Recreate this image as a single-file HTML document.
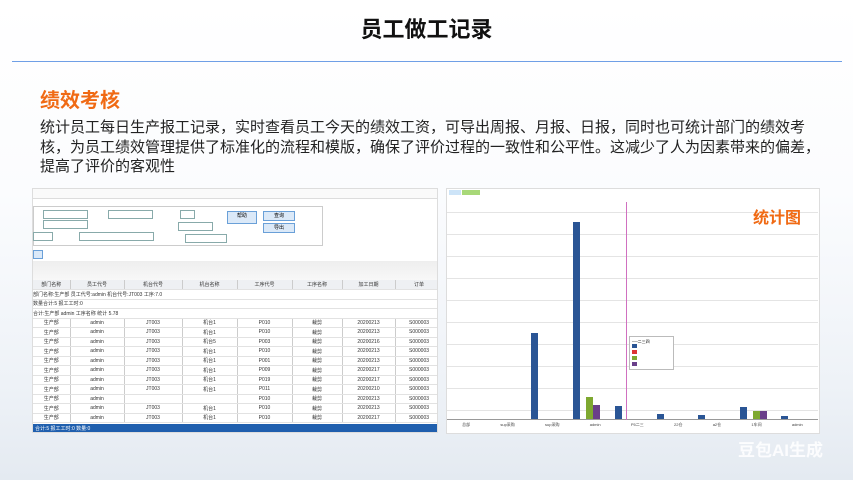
<!DOCTYPE html>
<html><head><meta charset="utf-8"><style>
*{margin:0;padding:0;box-sizing:border-box}
body{width:853px;height:480px;overflow:hidden;position:relative;font-family:"Liberation Sans","Noto Sans CJK SC",sans-serif;background:linear-gradient(180deg,#fff 0%,#fbfcfe 40%,#eef2f7 80%,#e4eaf1 100%)}
.a{position:absolute}
h1{position:absolute;left:0;width:853px;top:12px;text-align:center;font-size:22px;font-weight:bold;color:#111}
.hr{left:12px;top:61px;width:830px;height:1px;background:#6f9fe6}
.sub{left:40px;top:84px;font-size:20px;color:#f06a14;font-weight:bold}
.p{left:40px;top:118px;width:790px;font-size:15px;line-height:19.5px;color:#222}
.tbl td{border-right:1px solid #ccc;border-bottom:1px solid #e2e2e2;text-align:center;font-size:5px;color:#333;height:9.5px;white-space:nowrap;overflow:hidden}
.tbl{border-collapse:collapse;table-layout:fixed}
.in{position:absolute;height:9px;border:1px solid #8aa;background:#fff}
.btn{position:absolute;height:10px;border:1px solid #6aa0d8;background:#dbe9f8;font-size:5px;text-align:center;line-height:8px}
.g{position:absolute;left:0;width:371px;height:1px;background:#e4e4e4}
.bar{position:absolute;bottom:0;width:7px}
</style></head><body>
<h1>员工做工记录</h1>
<div class="a hr"></div>
<div class="a sub">绩效考核</div>
<div class="a p">统计员工每日生产报工记录，实时查看员工今天的绩效工资，可导出周报、月报、日报，同时也可统计部门的绩效考核，为员工绩效管理提供了标准化的流程和模版，确保了评价过程的一致性和公平性。这减少了人为因素带来的偏差，提高了评价的客观性</div>

<div class="a" style="left:32px;top:188px;width:406px;height:245px;background:#fff;border:1px solid #ddd;overflow:hidden">
 <div class="a" style="left:0;top:0;width:406px;height:10px;border-bottom:1px solid #ddd;background:#fafafa"></div>
 <div class="a" style="left:0;top:17px;width:290px;height:40px;border:1px solid #ccc"></div>
 <div class="in" style="left:10px;top:21px;width:45px"></div>
 <div class="in" style="left:75px;top:21px;width:45px"></div>
 <div class="in" style="left:10px;top:31px;width:45px"></div>
 <div class="in" style="left:147px;top:21px;width:15px"></div>
 <div class="in" style="left:145px;top:33px;width:35px"></div>
 <div class="in" style="left:0;top:43px;width:20px"></div>
 <div class="in" style="left:46px;top:43px;width:75px"></div>
 <div class="in" style="left:152px;top:45px;width:42px"></div>
 <div class="btn" style="left:194px;top:22px;width:30px;height:13px">帮助</div>
 <div class="btn" style="left:230px;top:22px;width:32px">查询</div>
 <div class="btn" style="left:230px;top:34px;width:32px">导出</div>
 <div class="a" style="left:0;top:61px;width:10px;height:9px;border:1px solid #6aa0d8;background:#dbe9f8"></div>
 <div class="a" style="left:0;top:72px;width:406px;height:20px;background:linear-gradient(#eee,#f8f8f8)"></div>
 <table class="tbl a" style="left:0;top:91px;width:410px">
  <colgroup><col width="37"><col width="54"><col width="58"><col width="55"><col width="55"><col width="50"><col width="53"><col width="48"></colgroup>
  <tr style="background:#eef0f3"><td>部门名称</td><td>员工代号</td><td>机台代号</td><td>机台名称</td><td>工序代号</td><td>工序名称</td><td>加工日期</td><td>订单</td></tr>
  <tr><td colspan="8" style="text-align:left">部门名称:生产部 员工代号:admin 机台代号:JT003 工序:7.0</td></tr>
  <tr><td colspan="8" style="text-align:left">数量合计:5 报工工时:0</td></tr>
  <tr><td colspan="8" style="text-align:left">合计:生产部 admin 工序名称 统计 5.78</td></tr>
  <tr><td>生产部</td><td>admin</td><td>JT003</td><td>机台1</td><td>P010</td><td>裁剪</td><td>20200213</td><td>S000003</td></tr>
  <tr><td>生产部</td><td>admin</td><td>JT003</td><td>机台1</td><td>P010</td><td>裁剪</td><td>20200213</td><td>S000003</td></tr>
  <tr><td>生产部</td><td>admin</td><td>JT003</td><td>机台5</td><td>P003</td><td>裁剪</td><td>20200216</td><td>S000003</td></tr>
  <tr><td>生产部</td><td>admin</td><td>JT003</td><td>机台1</td><td>P010</td><td>裁剪</td><td>20200213</td><td>S000003</td></tr>
  <tr><td>生产部</td><td>admin</td><td>JT003</td><td>机台1</td><td>P001</td><td>裁剪</td><td>20200213</td><td>S000003</td></tr>
  <tr><td>生产部</td><td>admin</td><td>JT003</td><td>机台1</td><td>P009</td><td>裁剪</td><td>20200217</td><td>S000003</td></tr>
  <tr><td>生产部</td><td>admin</td><td>JT003</td><td>机台1</td><td>P019</td><td>裁剪</td><td>20200217</td><td>S000003</td></tr>
  <tr><td>生产部</td><td>admin</td><td>JT003</td><td>机台1</td><td>P011</td><td>裁剪</td><td>20200210</td><td>S000003</td></tr>
  <tr><td>生产部</td><td>admin</td><td></td><td></td><td>P010</td><td>裁剪</td><td>20200213</td><td>S000003</td></tr>
  <tr><td>生产部</td><td>admin</td><td>JT003</td><td>机台1</td><td>P010</td><td>裁剪</td><td>20200213</td><td>S000003</td></tr>
  <tr><td>生产部</td><td>admin</td><td>JT003</td><td>机台1</td><td>P010</td><td>裁剪</td><td>20200217</td><td>S000003</td></tr>
 </table>
 <div class="a" style="left:0;top:235px;width:406px;height:10px;background:#1f5fae;color:#fff;font-size:5px;line-height:10px;padding-left:2px">合计:5 报工工时:0 数量:0</div>
</div>

<div class="a" style="left:446px;top:188px;width:374px;height:246px;background:#fff;border:1px solid #ddd">
 <div class="a" style="left:2px;top:1px;width:12px;height:5px;background:#cde4f8"></div>
 <div class="a" style="left:15px;top:1px;width:18px;height:5px;background:#a8d878"></div>
 <div class="a" style="left:0;top:13px;width:371px;height:218px">
  <div class="g" style="top:10px"></div><div class="g" style="top:32px"></div><div class="g" style="top:54px"></div><div class="g" style="top:76px"></div><div class="g" style="top:98px"></div><div class="g" style="top:120px"></div><div class="g" style="top:142px"></div><div class="g" style="top:164px"></div><div class="g" style="top:186px"></div><div class="g" style="top:208px"></div>
  <div class="a" style="left:0;top:217px;width:371px;height:1px;background:#999"></div>
  <div class="a" style="left:179px;top:0;width:1px;height:218px;background:#d070c0"></div>
  <div class="a" style="left:0;top:0;width:371px;height:217px">
   <div class="bar" style="left:84px;height:86px;background:#2a5595"></div>
   <div class="bar" style="left:126px;height:197px;background:#2a5595"></div>
   <div class="bar" style="left:139px;height:22px;background:#7ea830"></div>
   <div class="bar" style="left:146px;height:14px;background:#6a3f8a"></div>
   <div class="bar" style="left:168px;height:13px;background:#2a5595"></div>
   <div class="bar" style="left:210px;height:5px;background:#2a5595"></div>
   <div class="bar" style="left:251px;height:4px;background:#2a5595"></div>
   <div class="bar" style="left:293px;height:12px;background:#2a5595"></div>
   <div class="bar" style="left:306px;height:8px;background:#7ea830"></div>
   <div class="bar" style="left:313px;height:8px;background:#6a3f8a"></div>
   <div class="bar" style="left:334px;height:3px;background:#2a5595"></div>
  </div>
  <div class="a" style="left:182px;top:134px;width:45px;height:34px;border:1px solid #bbb;background:#fff;font-size:4px;padding:2px">
   <div style="height:5px">──二三四</div>
   <div style="height:6px"><span style="display:inline-block;width:5px;height:4px;background:#2a5595"></span></div>
   <div style="height:6px"><span style="display:inline-block;width:5px;height:4px;background:#d33"></span></div>
   <div style="height:6px"><span style="display:inline-block;width:5px;height:4px;background:#7ea830"></span></div>
   <div style="height:6px"><span style="display:inline-block;width:5px;height:4px;background:#6a3f8a"></span></div>
  </div>
  <div class="a" style="left:306px;top:2px;font-size:16px;color:#f06a14;font-weight:bold">统计图</div>
 </div>
 <div class="a" style="left:0;top:233px;width:371px;font-size:4px;color:#444;display:flex;justify-content:space-around"><span>总部</span><span>sup采购</span><span>sup采购</span><span>admin</span><span>P5二三</span><span>22仓</span><span>a2仓</span><span>1车间</span><span>admin</span></div>
</div>

<div class="a" style="left:738px;top:436px;font-size:17px;font-weight:bold;color:rgba(255,255,255,0.85)">豆包AI生成</div>
</body></html>
